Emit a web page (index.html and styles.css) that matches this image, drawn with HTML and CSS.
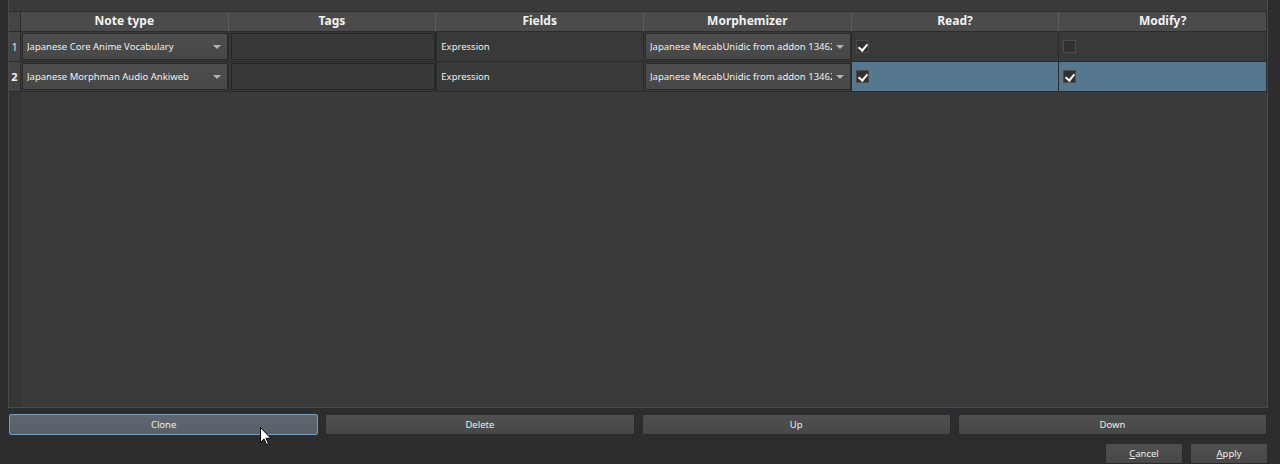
FILE: index.html
```html
<!DOCTYPE html>
<html>
<head>
<meta charset="utf-8">
<link rel="stylesheet" href="styles.css">
</head>
<body>
<div class="window">
  <div class="table-frame">
    <div class="table">
      <div class="corner"></div>
      <div class="hdr">Note type</div>
      <div class="hdr">Tags</div>
      <div class="hdr">Fields</div>
      <div class="hdr">Morphemizer</div>
      <div class="hdr">Read?</div>
      <div class="hdr last">Modify?</div>

      <div class="vh">1</div>
      <div class="cell"><div class="combo"><span class="combo-text">Japanese Core Anime Vocabulary</span><span class="arrow"></span></div></div>
      <div class="cell"><div class="edit"></div></div>
      <div class="cell text">Expression</div>
      <div class="cell"><div class="combo"><span class="combo-text">Japanese MecabUnidic from addon 13462</span><span class="arrow"></span></div></div>
      <div class="cell check-cell"><span class="checkbox checked"></span></div>
      <div class="cell check-cell last"><span class="checkbox"></span></div>

      <div class="vh bold">2</div>
      <div class="cell"><div class="combo"><span class="combo-text">Japanese Morphman Audio Ankiweb</span><span class="arrow"></span></div></div>
      <div class="cell"><div class="edit"></div></div>
      <div class="cell text">Expression</div>
      <div class="cell"><div class="combo"><span class="combo-text">Japanese MecabUnidic from addon 13462</span><span class="arrow"></span></div></div>
      <div class="cell check-cell selected"><span class="checkbox checked"></span></div>
      <div class="cell check-cell selected last"><span class="checkbox checked"></span></div>
    </div>
    <div class="empty">
      <div class="vh-strip"></div>
      <div class="viewport"></div>
    </div>
  </div>

  <div class="actions">
    <button class="btn focused">Clone</button>
    <button class="btn">Delete</button>
    <button class="btn">Up</button>
    <button class="btn">Down</button>
  </div>

  <div class="dialog-buttons">
    <button class="btn small"><u>C</u>ancel</button>
    <button class="btn small"><u>A</u>pply</button>
  </div>

  <svg class="cursor" width="12" height="19" viewBox="0 0 12 19">
    <path d="M0.5 0.5 L0.5 15.5 L4 12 L6.5 17.5 L8.5 16.6 L6 11.3 L10.8 11.3 Z" fill="#ffffff" stroke="#000000" stroke-width="1"/>
  </svg>
</div>
</body>
</html>
```

FILE: styles.css
```css
* { box-sizing: border-box; }

html, body {
  margin: 0;
  padding: 0;
  background: #2d2d30;
}

body {
  width: 1280px;
  height: 464px;
  overflow: hidden;
  font-family: "Noto Sans", "Open Sans", "DejaVu Sans", sans-serif;
  color: #e8e8e8;
}

.window {
  position: relative;
  width: 1280px;
  height: 464px;
  display: flex;
  flex-direction: column;
}

.table-frame {
  margin-left: 8px;
  width: 1260px;
  height: 408px;
  border-left: 1px solid #4a4a4c;
  border-right: 1px solid #4a4a4c;
  border-bottom: 1px solid #4a4a4c;
  background: #3a3a3a;
  padding-top: 11px;
  display: flex;
  flex-direction: column;
}

.table {
  display: grid;
  grid-template-columns: 12px repeat(6, minmax(0, 1fr));
  grid-template-rows: 20px 30px 30px;
  border-top: 1px solid #2c2c2c;
}

.corner {
  background: #454545;
  border-right: 1px solid #2c2c2c;
  border-bottom: 1px solid #2c2c2c;
}

.hdr {
  background: #4b4b4b;
  border-right: 1px solid #5c5c5c;
  border-bottom: 1px solid #2c2c2c;
  font-weight: bold;
  font-size: 12px;
  color: #f2f2f2;
  display: flex;
  align-items: center;
  justify-content: center;
  line-height: 1;
  padding-bottom: 1px;
}

.hdr.last { border-right: 1px solid #2c2c2c; }

.vh {
  background: #454545;
  border-right: 1px solid #2c2c2c;
  border-bottom: 1px solid #2c2c2c;
  font-size: 10px;
  color: #f0f0f0;
  display: flex;
  align-items: center;
  justify-content: center;
}

.vh.bold { font-weight: bold; font-size: 11px; }

.cell {
  min-width: 0;
  background: #393939;
  border-right: 1px solid #2a2a2a;
  border-bottom: 1px solid #2a2a2a;
  display: flex;
  align-items: stretch;
  padding: 1px 0 1px 1px;
}

.cell.text {
  align-items: center;
  padding-left: 4px;
  font-size: 9.5px;
  color: #f0f0f0;
  border-left: 1px solid #262a30;
}

.combo {
  flex: 1;
  min-width: 0;
  display: flex;
  align-items: center;
  justify-content: space-between;
  background: linear-gradient(#4e4e4e, #474747);
  border: 1px solid #2b2b2b;
  border-radius: 2px;
  padding: 0 6px 0 4px;
  font-size: 9.5px;
  color: #f0f0f0;
  white-space: nowrap;
  overflow: hidden;
}

.combo-text {
  overflow: hidden;
  min-width: 0;
  padding-bottom: 1px;
}

.arrow {
  width: 0;
  height: 0;
  border-left: 4px solid transparent;
  border-right: 4px solid transparent;
  border-top: 4px solid #b4b4b4;
  flex: none;
  margin-left: 4px;
}

.edit {
  flex: 1;
  margin-left: 1px;
  background: #383838;
  border: 1px solid #262626;
  border-top-color: #222222;
}

.check-cell {
  align-items: center;
  padding-left: 4px;
}

.check-cell.selected { background: #56788f; }

.check-cell.last { border-right: 1px solid #2a2a2a; }

.checkbox {
  position: relative;
  width: 13px;
  height: 13px;
  background: #313131;
  border: 1px solid #4c4c4c;
}

.checkbox.checked::after {
  content: "";
  position: absolute;
  left: 3px;
  top: 1px;
  width: 4px;
  height: 7px;
  border-right: 2px solid #ffffff;
  border-bottom: 2px solid #ffffff;
  transform: rotate(40deg);
}

.empty {
  flex: 1;
  display: flex;
}

.vh-strip {
  width: 12px;
  background: #353537;
}

.viewport {
  flex: 1;
  background: #3a3a3a;
}

.actions {
  display: flex;
  gap: 7px;
  margin: 6px 13px 0 9px;
  height: 21px;
}

.btn {
  font-family: "Noto Sans", "Open Sans", "DejaVu Sans", sans-serif;
  font-size: 9.5px;
  color: #eeeeee;
  background: linear-gradient(#505050, #474747);
  border: 1px solid #2a2a2a;
  border-radius: 2px;
  padding: 0;
  display: flex;
  align-items: center;
  justify-content: center;
}

.actions .btn { flex: 1; }

.btn.focused {
  background: linear-gradient(#5e6770, #58616a);
  border: 1px solid #7d9cb8;
}

.dialog-buttons {
  display: flex;
  justify-content: flex-end;
  gap: 7px;
  margin: 8px 12px 0 0;
  height: 21px;
}

.btn.small { width: 78px; }

.btn u { text-decoration: underline; text-underline-offset: 1px; }

.cursor {
  position: absolute;
  left: 260px;
  top: 427px;
}
```
